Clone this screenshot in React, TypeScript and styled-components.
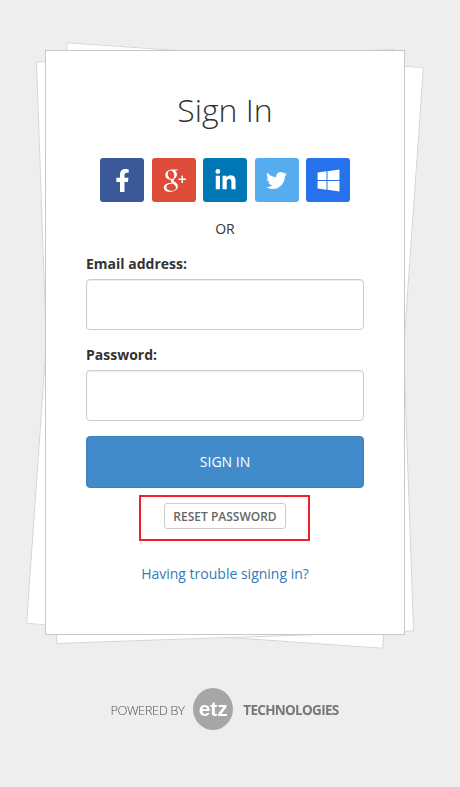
import styled, { createGlobalStyle } from "styled-components";
import { FaFacebookF, FaLinkedinIn, FaTwitter, FaWindows } from "react-icons/fa";
import { TiSocialGooglePlus } from "react-icons/ti";

const GlobalStyle = createGlobalStyle`
  html, body {
    margin: 0;
    padding: 0;
    background: #eeeeee;
    font-family: "Open Sans", "Liberation Sans", sans-serif;
    color: #333;
  }
  * { box-sizing: border-box; }
`;

const Page = styled.div`
  width: 460px;
  height: 787px;
  padding: 50px 10px 0 0;
  display: flex;
  flex-direction: column;
  align-items: center;
  overflow: hidden;
`;

const Stack = styled.div`
  position: relative;
  width: 360px;
  height: 585px;
`;

const Sheet = styled.div<{ $angle: number; $top: number; $bottom: number }>`
  position: absolute;
  left: 1px;
  right: 1px;
  top: ${({ $top }) => $top}px;
  bottom: ${({ $bottom }) => $bottom}px;
  background: #fff;
  border: 1px solid #d4d4d4;
  transform: rotate(${({ $angle }) => $angle}deg);
`;

const Card = styled.main`
  position: relative;
  height: 100%;
  padding: 0 40px;
  background: #fff;
  border: 1px solid #c8c8c8;
  display: flex;
  flex-direction: column;
  align-items: center;
`;

const Title = styled.h1`
  margin: 37px 0 0;
  font-size: 32px;
  line-height: 44px;
  font-weight: 300;
  color: #333;
`;

const SocialRow = styled.div`
  margin-top: 26px;
  display: flex;
  gap: 7.5px;
`;

const SocialButton = styled.a<{ $bg: string }>`
  width: 44px;
  height: 44px;
  display: flex;
  align-items: center;
  justify-content: center;
  border-radius: 3px;
  color: #fff;
  background: ${({ $bg }) => $bg};
`;

const Or = styled.div`
  margin-top: 17px;
  font-size: 14px;
  line-height: 20px;
  color: #333;
`;

const Field = styled.div`
  width: 100%;
  margin-top: 15px;

  & + & {
    margin-top: 15px;
  }
`;

const Label = styled.label`
  display: block;
  font-size: 14px;
  line-height: 20px;
  font-weight: 700;
  color: #333;
  margin-bottom: 5px;
`;

const Input = styled.input`
  display: block;
  width: 100%;
  height: 51px;
  border: 1px solid #ccc;
  border-radius: 4px;
  background: #fff;
  box-shadow: inset 0 1px 1px rgba(0, 0, 0, 0.075);
`;

const SubmitButton = styled.button`
  width: 100%;
  height: 52px;
  margin-top: 15px;
  padding: 0 0 2px;
  border: 1px solid #3b7fbb;
  border-radius: 4px;
  background: #428bca;
  color: #fff;
  font: 400 14px "Open Sans", sans-serif;
`;

const ResetBox = styled.div`
  width: 171px;
  height: 46px;
  margin: 7px 1px 0 0;
  border: 2px solid #f01f2a;
  display: flex;
  align-items: center;
  justify-content: center;
`;

const ResetButton = styled.button`
  width: 122px;
  height: 26px;
  margin: 0 0 4px 1px;
  padding: 0;
  border: 1px solid #ccc;
  border-radius: 3px;
  background: #fff;
  color: #666;
  font: 600 12px "Open Sans", sans-serif;
`;

const HelpLink = styled.a`
  margin-top: 23px;
  font-size: 14px;
  line-height: 20px;
  color: #337ab7;
`;

const Footer = styled.footer`
  margin: 53px 0 0 -1px;
  display: flex;
  align-items: center;
  color: #777;
  filter: blur(0.4px);
`;

const PoweredBy = styled.span`
  padding-top: 2px;
  font-size: 13px;
  font-weight: 300;
  letter-spacing: -0.5px;
  color: #555;
`;

const Badge = styled.span`
  width: 40px;
  height: 42px;
  margin: 0 10px 0 9px;
  border-radius: 50%;
  background: #a6a6a6;
  color: #fff;
  display: flex;
  align-items: center;
  justify-content: center;
  font: 700 21px "Liberation Sans", sans-serif;
`;

const Technologies = styled.span`
  padding-top: 2px;
  font-size: 13.5px;
  font-weight: 700;
  letter-spacing: -0.7px;
  color: #777;
`;

const socials = [
  { id: "facebook", bg: "#3b5998", Icon: FaFacebookF, size: 23 },
  { id: "google", bg: "#dd4b39", Icon: TiSocialGooglePlus, size: 36 },
  { id: "linkedin", bg: "#0077b5", Icon: FaLinkedinIn, size: 23 },
  { id: "twitter", bg: "#55acee", Icon: FaTwitter, size: 21 },
  { id: "windows", bg: "#2672ec", Icon: FaWindows, size: 25 },
];

export default function App() {
  return (
    <>
      <GlobalStyle />
      <Page>
        <Stack>
          <Sheet $angle={4} $top={4} $bottom={-2} />
          <Sheet $angle={-2} $top={5} $bottom={-3} />
          <Card>
            <Title>Sign In</Title>
            <SocialRow>
              {socials.map(({ id, bg, Icon, size }) => (
                <SocialButton key={id} $bg={bg}>
                  <Icon size={size} />
                </SocialButton>
              ))}
            </SocialRow>
            <Or>OR</Or>
            <Field>
              <Label>Email address:</Label>
              <Input type="text" />
            </Field>
            <Field>
              <Label>Password:</Label>
              <Input type="password" />
            </Field>
            <SubmitButton>SIGN IN</SubmitButton>
            <ResetBox>
              <ResetButton>RESET PASSWORD</ResetButton>
            </ResetBox>
            <HelpLink>Having trouble signing in?</HelpLink>
          </Card>
        </Stack>
        <Footer>
          <PoweredBy>POWERED BY</PoweredBy>
          <Badge>etz</Badge>
          <Technologies>TECHNOLOGIES</Technologies>
        </Footer>
      </Page>
    </>
  );
}
